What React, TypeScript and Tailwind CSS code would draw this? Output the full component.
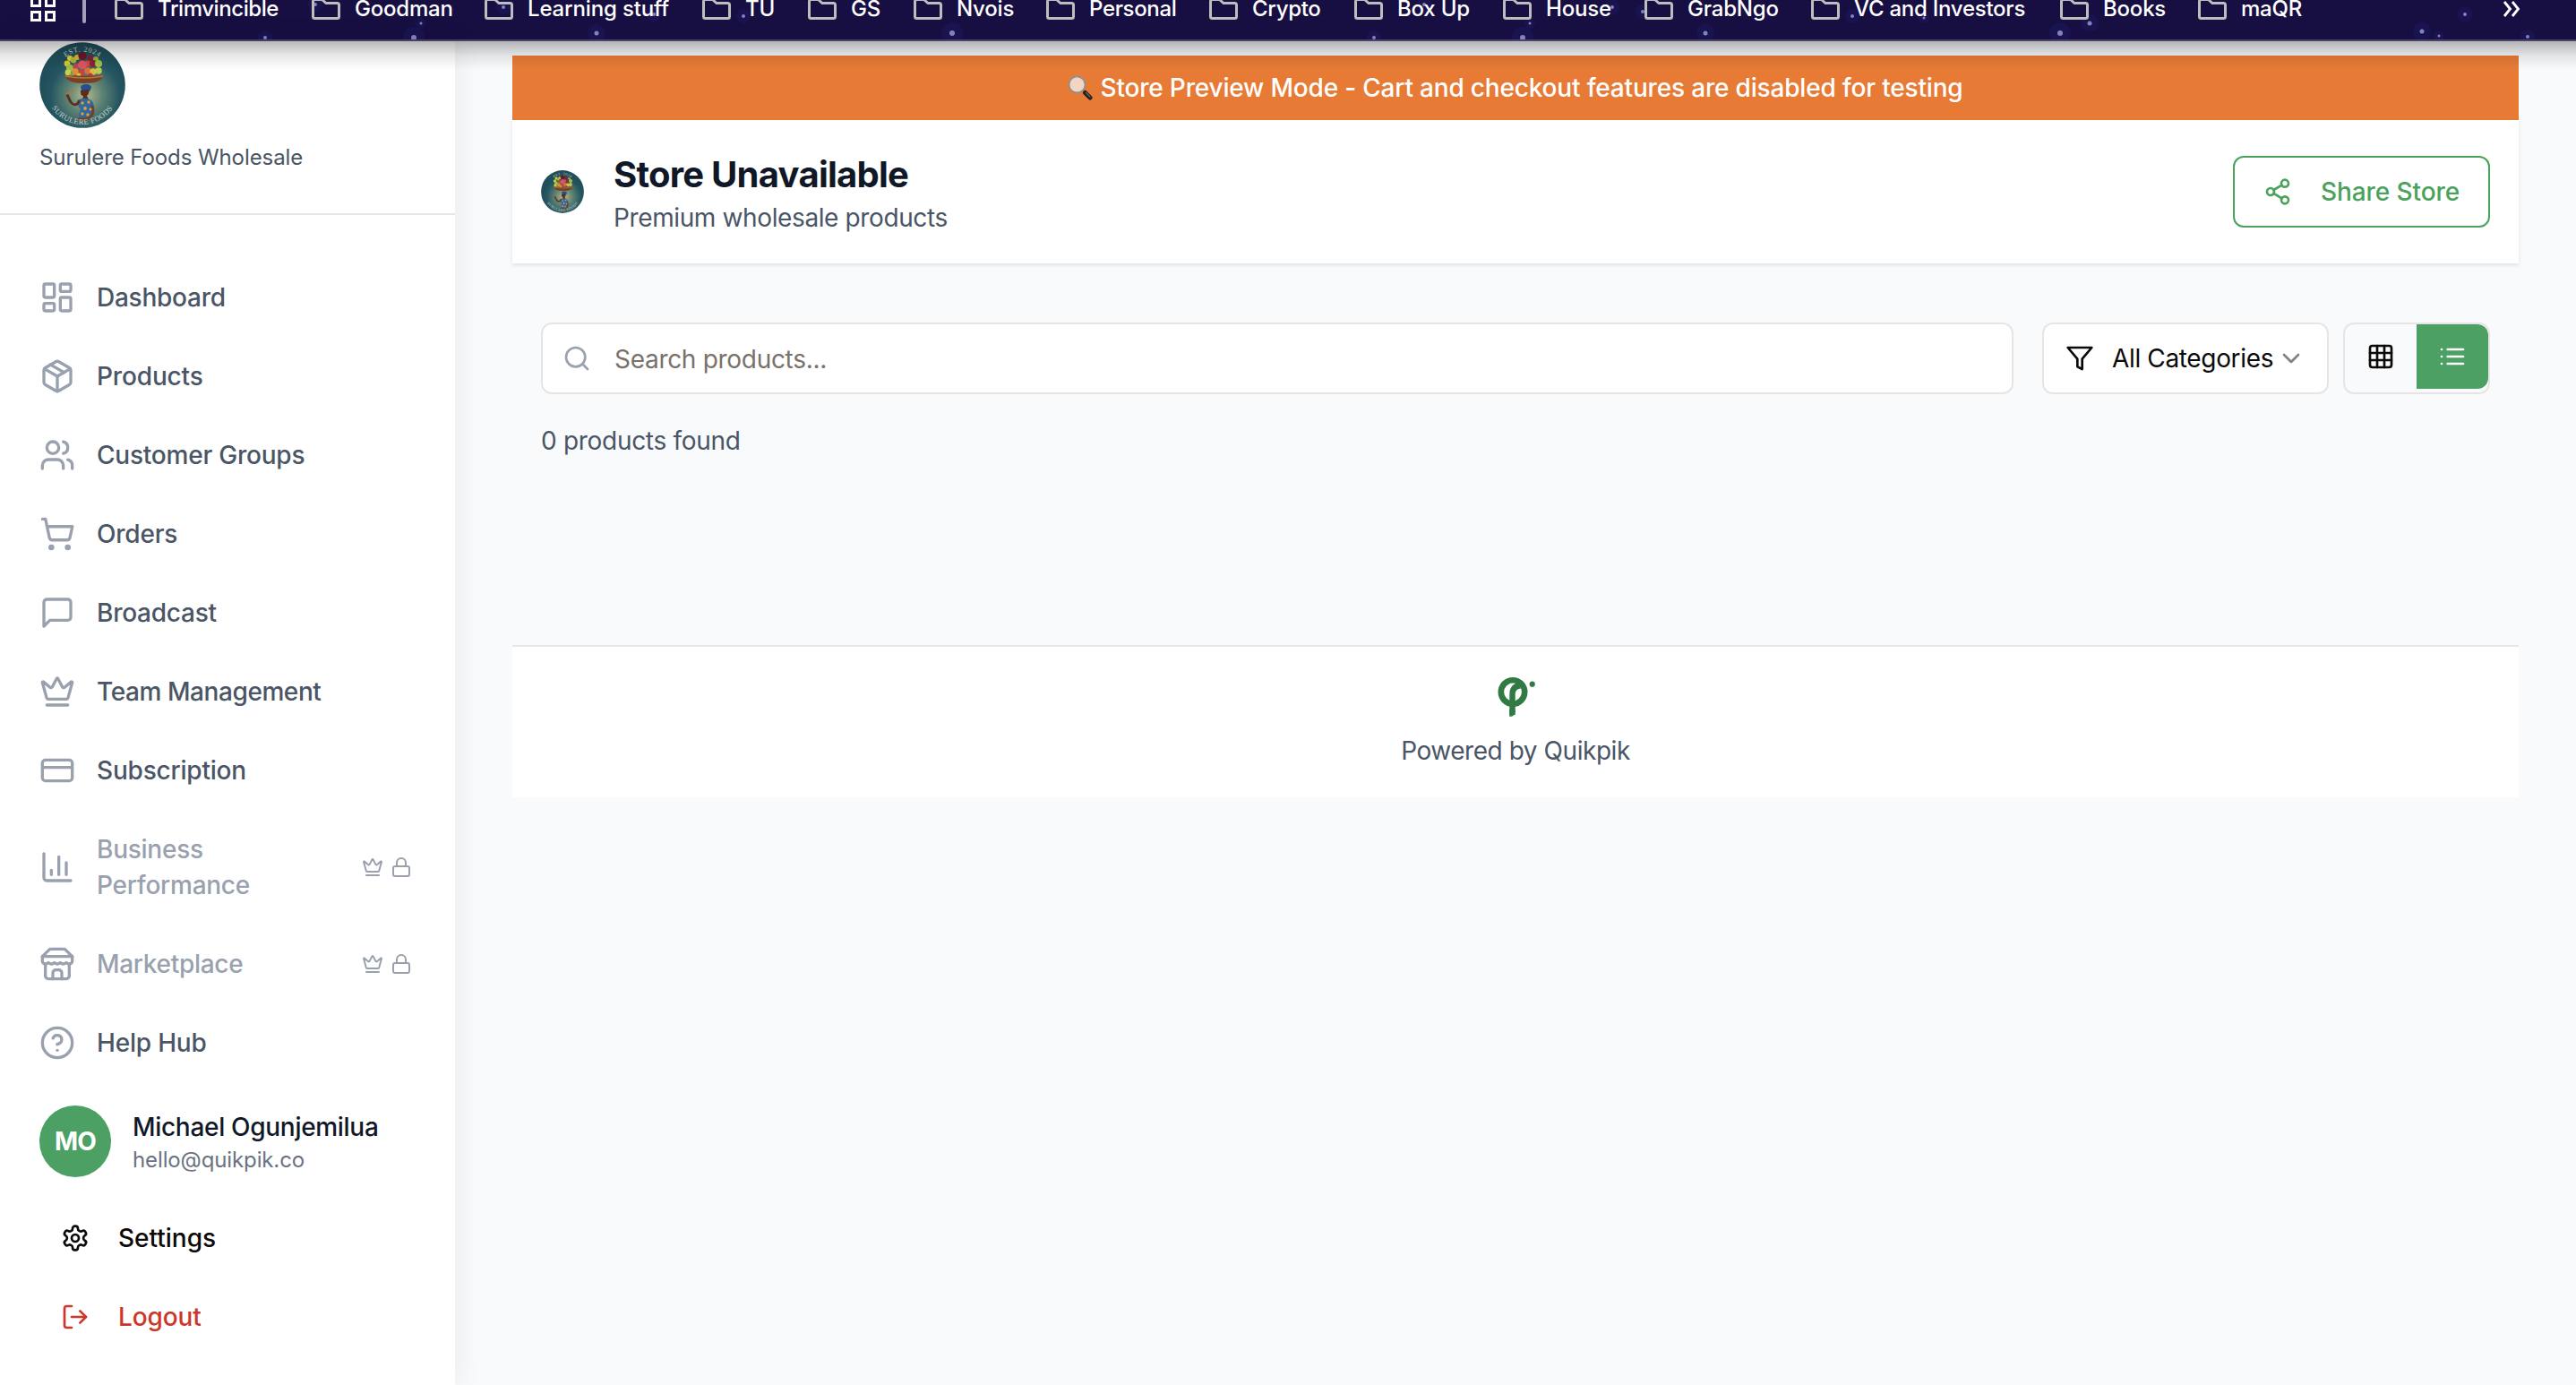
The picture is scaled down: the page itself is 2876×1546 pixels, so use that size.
import React from "react";
import type { ReactNode } from "react";

type IconProps = { className?: string; children?: ReactNode };

function Icon({ className = "size-10", children }: IconProps) {
  return (
    <svg
      viewBox="0 0 24 24"
      fill="none"
      stroke="currentColor"
      strokeWidth={2}
      strokeLinecap="round"
      strokeLinejoin="round"
      className={`shrink-0 ${className}`}
    >
      {children}
    </svg>
  );
}

const crown = (
  <>
    <path d="M11.562 3.266a.5.5 0 0 1 .876 0L15.39 8.87a1 1 0 0 0 1.516.294L21.183 5.5a.5.5 0 0 1 .798.519l-2.834 10.246a1 1 0 0 1-.956.734H5.81a1 1 0 0 1-.957-.734L2.02 6.02a.5.5 0 0 1 .798-.519l4.276 3.664a1 1 0 0 0 1.516-.294z" />
    <path d="M5 21h14" />
  </>
);

const glyphs = {
  dashboard: (
    <>
      <rect width="7" height="9" x="3" y="3" rx="1" />
      <rect width="7" height="5" x="14" y="3" rx="1" />
      <rect width="7" height="9" x="14" y="12" rx="1" />
      <rect width="7" height="5" x="3" y="16" rx="1" />
    </>
  ),
  box: (
    <>
      <path d="m7.5 4.27 9 5.15" />
      <path d="M21 8a2 2 0 0 0-1-1.73l-7-4a2 2 0 0 0-2 0l-7 4A2 2 0 0 0 3 8v8a2 2 0 0 0 1 1.73l7 4a2 2 0 0 0 2 0l7-4A2 2 0 0 0 21 16Z" />
      <path d="m3.3 7 8.7 5 8.7-5" />
      <path d="M12 22V12" />
    </>
  ),
  users: (
    <>
      <path d="M16 21v-2a4 4 0 0 0-4-4H6a4 4 0 0 0-4 4v2" />
      <circle cx="9" cy="7" r="4" />
      <path d="M22 21v-2a4 4 0 0 0-3-3.87" />
      <path d="M16 3.13a4 4 0 0 1 0 7.75" />
    </>
  ),
  cart: (
    <>
      <circle cx="8" cy="21" r="1" />
      <circle cx="19" cy="21" r="1" />
      <path d="M2.05 2.05h2l2.66 12.42a2 2 0 0 0 2 1.58h9.78a2 2 0 0 0 1.95-1.57l1.65-7.43H5.12" />
    </>
  ),
  message: <path d="M21 15a2 2 0 0 1-2 2H7l-4 4V5a2 2 0 0 1 2-2h14a2 2 0 0 1 2 2z" />,
  crown,
  card: (
    <>
      <rect width="20" height="14" x="2" y="5" rx="2" />
      <path d="M2 10h20" />
    </>
  ),
  chart: (
    <>
      <path d="M3 3v16a2 2 0 0 0 2 2h16" />
      <path d="M18 17V9" />
      <path d="M13 17V5" />
      <path d="M8 17v-3" />
    </>
  ),
  store: (
    <>
      <path d="m2 7 4.41-4.41A2 2 0 0 1 7.83 2h8.34a2 2 0 0 1 1.42.59L22 7" />
      <path d="M4 12v8a2 2 0 0 0 2 2h12a2 2 0 0 0 2-2v-8" />
      <path d="M15 22v-4a2 2 0 0 0-2-2h-2a2 2 0 0 0-2 2v4" />
      <path d="M2 7h20" />
      <path d="M22 7v3a2 2 0 0 1-2 2a2.7 2.7 0 0 1-1.59-.63.7.7 0 0 0-.82 0A2.7 2.7 0 0 1 16 12a2.7 2.7 0 0 1-1.59-.63.7.7 0 0 0-.82 0A2.7 2.7 0 0 1 12 12a2.7 2.7 0 0 1-1.59-.63.7.7 0 0 0-.82 0A2.7 2.7 0 0 1 8 12a2.7 2.7 0 0 1-1.59-.63.7.7 0 0 0-.82 0A2.7 2.7 0 0 1 4 12a2 2 0 0 1-2-2V7" />
    </>
  ),
  help: (
    <>
      <circle cx="12" cy="12" r="10" />
      <path d="M9.09 9a3 3 0 0 1 5.83 1c0 2-3 3-3 3" />
      <path d="M12 17h.01" />
    </>
  ),
  lock: (
    <>
      <rect width="18" height="11" x="3" y="11" rx="2" />
      <path d="M7 11V7a5 5 0 0 1 10 0v4" />
    </>
  ),
  settings: (
    <>
      <path d="M12.22 2h-.44a2 2 0 0 0-2 2v.18a2 2 0 0 1-1 1.73l-.43.25a2 2 0 0 1-2 0l-.15-.08a2 2 0 0 0-2.73.73l-.22.38a2 2 0 0 0 .73 2.73l.15.1a2 2 0 0 1 1 1.72v.51a2 2 0 0 1-1 1.74l-.15.09a2 2 0 0 0-.73 2.73l.22.38a2 2 0 0 0 2.73.73l.15-.08a2 2 0 0 1 2 0l.43.25a2 2 0 0 1 1 1.73V20a2 2 0 0 0 2 2h.44a2 2 0 0 0 2-2v-.18a2 2 0 0 1 1-1.73l.43-.25a2 2 0 0 1 2 0l.15.08a2 2 0 0 0 2.73-.73l.22-.39a2 2 0 0 0-.73-2.73l-.15-.08a2 2 0 0 1-1-1.74v-.5a2 2 0 0 1 1-1.74l.15-.09a2 2 0 0 0 .73-2.73l-.22-.38a2 2 0 0 0-2.73-.73l-.15.08a2 2 0 0 1-2 0l-.43-.25a2 2 0 0 1-1-1.73V4a2 2 0 0 0-2-2z" />
      <circle cx="12" cy="12" r="3" />
    </>
  ),
  logout: (
    <>
      <path d="M9 21H5a2 2 0 0 1-2-2V5a2 2 0 0 1 2-2h4" />
      <path d="m16 17 5-5-5-5" />
      <path d="M21 12H9" />
    </>
  ),
  share: (
    <>
      <circle cx="18" cy="5" r="3" />
      <circle cx="6" cy="12" r="3" />
      <circle cx="18" cy="19" r="3" />
      <path d="m8.59 13.51 6.83 3.98" />
      <path d="m15.41 6.51-6.82 3.98" />
    </>
  ),
  search: (
    <>
      <circle cx="11" cy="11" r="8" />
      <path d="m21 21-4.3-4.3" />
    </>
  ),
  filter: <path d="M22 3H2l8 9.46V19l4 2v-8.54z" />,
  chevron: <path d="m6 9 6 6 6-6" />,
  grid: (
    <>
      <rect width="18" height="18" x="3" y="3" rx="2" />
      <path d="M3 9h18" />
      <path d="M3 15h18" />
      <path d="M9 3v18" />
      <path d="M15 3v18" />
    </>
  ),
  list: (
    <>
      <path d="M8 6h13M8 12h13M8 18h13" />
      <path d="M3 6h.01M3 12h.01M3 18h.01" />
    </>
  ),
};

const fruit: [number, number, number, string][] = [
  [31, 24, 3.4, "#d9c437"],
  [34, 18, 3, "#e3cf3c"],
  [38, 20, 3.4, "#a9b93a"],
  [42, 17, 3, "#d8b52f"],
  [48, 15.5, 4.6, "#6d1626"],
  [57, 18, 3.6, "#7d2338"],
  [63, 19, 3, "#99ad38"],
  [54, 24, 3.4, "#cf4a3c"],
  [60, 24, 4, "#8a2436"],
  [66, 24, 4, "#a3bf4b"],
  [34, 29, 4, "#9cc04a"],
  [41, 27, 3.6, "#b8474c"],
  [48, 25.5, 5, "#dd5560"],
  [32, 34, 3.4, "#c9cf4a"],
  [40, 33, 3.8, "#e08a3a"],
  [47, 34, 3.4, "#c8433b"],
  [54, 32, 3.8, "#d9723a"],
  [60, 33, 3.8, "#e0b644"],
  [66, 32, 3.8, "#bccb4c"],
  [36, 37, 2.6, "#7fa640"],
  [57, 37, 2.6, "#b53f3d"],
  [44, 37, 2.4, "#d9c437"],
];

function BrandLogo({ id, className }: { id: string; className: string }) {
  return (
    <svg viewBox="0 0 96 96" className={`shrink-0 ${className}`}>
      <defs>
        <radialGradient id={`${id}-glow`} cx="0.53" cy="0.62" r="0.5">
          <stop offset="0" stopColor="#b5b98c" />
          <stop offset="0.4" stopColor="#5f8474" />
          <stop offset="0.8" stopColor="#265661" />
          <stop offset="1" stopColor="#204f5a" />
        </radialGradient>
        <path id={`${id}-top`} d="M14 48a34 37.5 0 0 1 68 0" />
        <path id={`${id}-bottom`} d="M6 48a42 44 0 0 0 84 0" />
      </defs>
      <circle cx="48" cy="48" r="47.8" fill={`url(#${id}-glow)`} />
      {fruit.map(([x, y, r, c], i) => (
        <circle key={i} cx={x} cy={y} r={r} fill={c} />
      ))}
      <path d="M29 37.5h42c-1 5-7 8.500-21 8.500s-20-3.500-21-8.500z" fill="#7b3f22" />
      <path d="M29 38q21 4 42 0" fill="none" stroke="#b8733f" strokeWidth="1.400" />
      <path d="M46 50c1-4 12-4 12 1l-2 4-9-1z" fill="#24508f" />
      <path d="M46 54l9-1c1 4-1 6-2 7l2 4h-7l1-4c-3 0-3-3-3-6z" fill="#5c2c1c" />
      <path d="M43 65c6-4 15-2 17 3 2 6 2 12-1 17l-14 1c-2-4 0-8 1-11-3-3-4-6-3-10z" fill="#2f699e" />
      <path d="M44 66c-2 5-6 5-9 1l-4-8" fill="none" stroke="#5c2c1c" strokeWidth="2.800" strokeLinecap="round" />
      <path d="M30 58l8-4" stroke="#b8733f" strokeWidth="1.500" strokeLinecap="round" />
      <path d="M59 72c2 7 1 10-6 14h-9" fill="none" stroke="#7a3c24" strokeWidth="2.800" strokeLinecap="round" />
      <g fill="#e0a033">
        <circle cx="48" cy="68" r="1.700" />
        <circle cx="55" cy="67" r="1.700" />
        <circle cx="51" cy="74" r="1.900" />
        <circle cx="57" cy="75" r="1.500" />
        <circle cx="48" cy="80" r="1.700" />
        <circle cx="54" cy="81" r="1.700" />
      </g>
      <g fill="#c3d2cf" className="font-['Liberation_Serif']">
        <text fontSize="8" letterSpacing="0.800" textAnchor="middle">
          <textPath href={`#${id}-top`} startOffset="50%">
            EST. 2024
          </textPath>
        </text>
        <text fontSize="8.500" letterSpacing="0.500" textAnchor="middle">
          <textPath href={`#${id}-bottom`} startOffset="50%">
            SURULERE FOODS
          </textPath>
        </text>
      </g>
    </svg>
  );
}

const bookmarks: [string, string, string][] = [
  ["Trimvincible", "w-[220px]", "tracking-[-0.42px]"],
  ["Goodman", "w-[193px]", "tracking-[-0.2px]"],
  ["Learning stuff", "w-[243px]", "tracking-[-0.15px]"],
  ["TU", "w-[118px]", "tracking-[-0.2px]"],
  ["GS", "w-[118px]", "tracking-[-0.2px]"],
  ["Nvois", "w-[148px]", "tracking-[-0.2px]"],
  ["Personal", "w-[182px]", "tracking-[-0.35px]"],
  ["Crypto", "w-[162px]", "tracking-[-0.3px]"],
  ["Box Up", "w-[166px]", "tracking-[-0.2px]"],
  ["House", "w-[158px]", "tracking-[-0.2px]"],
  ["GrabNgo", "w-[186px]", "tracking-[-0.2px]"],
  ["VC and Investors", "w-[278px]", "tracking-[-0.25px]"],
  ["Books", "w-[154px]", "tracking-[-0.2px]"],
  ["maQR", "w-[154px]", "tracking-[-0.2px]"],
];

const stars: [number, number, number][] = [
  [296, 42, 2], [462, 42, 3], [470, 26, 1.5], [666, 37, 2.5], [562, 8, 2], [730, 16, 2], [830, 18, 2],
  [1063, 37, 3], [1534, 42, 2], [1700, 42, 3], [1708, 26, 1.5], [1800, 8, 2], [1834, 13, 2], [1904, 37, 2.5],
  [2068, 18, 2], [2300, 37, 3], [2333, 26, 2.5], [2704, 35, 2.5], [2723, 40, 1.5], [2752, 16, 2], [2822, 41, 2],
  [352, 5, 2], [1590, 5, 2], [2148, 20, 1.5],
];

function BookmarksBar() {
  return (
    <header className="relative h-[46px] w-full shrink-0 overflow-hidden border-b-2 border-[#4b4169] bg-[#170e42]">
      <svg viewBox="0 0 2876 44" className="absolute inset-0 h-11 w-[2876px]">
        {stars.map(([x, y, r]) => (
          <g key={x}>
            <circle cx={x} cy={y} r={r * 4} fill="#2b3f9a" opacity="0.15" />
            <circle cx={x} cy={y} r={r} fill="#a9a6e0" opacity="0.750" />
          </g>
        ))}
      </svg>
      <div className="relative -mt-3.5 flex h-12 items-center pl-[34px] text-2xl font-medium text-white">
        <div className="grid size-7 grid-cols-2 gap-1">
          <span className="border-[3px] border-white" />
          <span className="border-[3px] border-white" />
          <span className="border-[3px] border-white" />
          <span className="border-[3px] border-white" />
        </div>
        <span className="mr-8 ml-[30px] h-8 w-1 rounded-full bg-[#a3a0bd]" />
        {bookmarks.map(([label, width, tracking]) => (
          <div key={label} className={`flex shrink-0 items-center gap-4 ${width}`}>
            <svg viewBox="0 0 32 26" fill="none" stroke="#bdbdbd" strokeWidth="3" className="h-[26px] w-8 shrink-0">
              <path d="M1.500 4.500a2 2 0 0 1 2-2h8l4.500 4H28.500a2 2 0 0 1 2 2V21.500a2 2 0 0 1-2 2H3.500a2 2 0 0 1-2-2z" />
            </svg>
            <span className={`whitespace-nowrap ${tracking}`}>{label}</span>
          </div>
        ))}
        <svg viewBox="0 0 20 18" fill="none" stroke="white" strokeWidth="2.800" className="ml-[186px] h-[18px] w-5 shrink-0">
          <path d="M2 1l6.500 8L2 17M11 1l6.500 8L11 17" />
        </svg>
      </div>
    </header>
  );
}

const nav: { label: string; icon: ReactNode; tracking: string; locked?: boolean }[] = [
  { label: "Dashboard", icon: glyphs.dashboard, tracking: "tracking-[-0.25px]" },
  { label: "Products", icon: glyphs.box, tracking: "tracking-[-0.15px]" },
  { label: "Customer Groups", icon: glyphs.users, tracking: "tracking-[-0.22px]" },
  { label: "Orders", icon: glyphs.cart, tracking: "tracking-[-0.2px]" },
  { label: "Broadcast", icon: glyphs.message, tracking: "tracking-[-0.25px]" },
  { label: "Team Management", icon: glyphs.crown, tracking: "tracking-[-0.42px]" },
  { label: "Subscription", icon: glyphs.card, tracking: "tracking-[-0.2px]" },
  { label: "Business Performance", icon: glyphs.chart, tracking: "tracking-[-0.25px]", locked: true },
  { label: "Marketplace", icon: glyphs.store, tracking: "tracking-[-0.3px]", locked: true },
  { label: "Help Hub", icon: glyphs.help, tracking: "tracking-[-0.2px]" },
];

function Sidebar() {
  return (
    <aside className="z-10 flex w-[508px] shrink-0 flex-col bg-white shadow-[0_0_30px_rgba(0,0,0,0.08)]">
      <div className="border-b-2 border-gray-200 pt-px pb-[46px] pl-11">
        <BrandLogo id="side" className="size-24" />
        <p className="mt-[17px] text-2xl leading-8 tracking-[-0.08px] text-gray-600">Surulere Foods Wholesale</p>
      </div>
      <nav className="mt-12 flex flex-col pr-12 pl-11 text-[28px] leading-10 font-medium">
        {nav.map((item) => (
          <a
            key={item.label}
            className={
              item.locked
                ? "flex items-center py-6 text-gray-400"
                : "flex items-center py-6 text-gray-600"
            }
          >
            <Icon className="size-10 text-gray-400">{item.icon}</Icon>
            <span className={`ml-6 flex-1 ${item.tracking}`}>{item.label}</span>
            {item.locked && (
              <span className="ml-20 flex gap-2">
                <Icon className="size-6">{glyphs.crown}</Icon>
                <Icon className="size-6">{glyphs.lock}</Icon>
              </span>
            )}
          </a>
        ))}
      </nav>
      <div className="mt-[26px] flex items-center gap-6 pl-11">
        <div className="flex size-20 items-center justify-center rounded-full bg-[#4ca064] text-[28px] font-bold tracking-[-0.8px] text-white">
          MO
        </div>
        <div>
          <p className="text-[28px] leading-10 font-medium tracking-[-0.3px] text-gray-900">Michael Ogunjemilua</p>
          <p className="text-2xl leading-[33px] tracking-[-0.12px] text-gray-500">hello@quikpik.co</p>
        </div>
      </div>
      <div className="mt-6 flex flex-col pl-[68px] text-[28px] leading-10 font-medium">
        <button className="flex items-center gap-8 py-6 text-stone-950">
          <Icon className="size-8">{glyphs.settings}</Icon>
          Settings
        </button>
        <button className="flex items-center gap-8 py-6 tracking-[-0.1px] text-[#cd372b]">
          <Icon className="size-8">{glyphs.logout}</Icon>
          Logout
        </button>
      </div>
    </aside>
  );
}

function Magnifier() {
  return (
    <svg viewBox="0 0 28 28" className="size-7 shrink-0">
      <path d="M17.500 17.500l2.500 2.500" stroke="#8b8b8b" strokeWidth="2.500" />
      <path d="M19.500 19.500l5.500 5.500" stroke="#222" strokeWidth="5" strokeLinecap="round" />
      <path d="M20.500 19.500l4.500 4.500" stroke="#666" strokeWidth="1.200" strokeLinecap="round" />
      <circle cx="10.500" cy="10.500" r="9" fill="#f3d5c3" stroke="#8f8f8f" strokeWidth="1.800" />
      <path d="M3.500 7.500a8 8 0 0 1 8-4.500" fill="none" stroke="#d5d5d5" strokeWidth="1" />
    </svg>
  );
}

function QuikpikMark() {
  return (
    <svg viewBox="0 0 48 48" className="size-12">
      <circle cx="21" cy="20.500" r="13.200" fill="none" stroke="#327a44" strokeWidth="6.600" />
      <path d="M20.500 46V23.500c0-6.500 3-10 9-10" fill="none" stroke="#327a44" strokeWidth="6.400" />
      <path d="M17.300 40h6.400c0 5-1.500 8-6.400 8z" fill="#327a44" />
      <circle cx="42.700" cy="11.700" r="3.100" fill="#327a44" />
    </svg>
  );
}

function Store() {
  return (
    <main className="flex flex-1 flex-col bg-[#f9fafc] pt-4 pr-16 pl-16">
      <div className="flex h-[72px] shrink-0 items-center justify-center gap-2 bg-[#e77b36] text-[28px] font-medium tracking-[-0.18px] text-white">
        <Magnifier />
        <span>Store Preview Mode - Cart and checkout features are disabled for testing</span>
      </div>

      <div className="flex h-40 shrink-0 items-center bg-white px-8 shadow-[0_2px_4px_rgba(0,0,0,0.1)]">
        <BrandLogo id="head" className="size-12" />
        <div className="ml-[33px] flex-1 pt-px">
          <h1 className="text-[40px] leading-[56px] font-bold tracking-[-0.75px] text-gray-900">Store Unavailable</h1>
          <p className="text-[28px] leading-10 tracking-[-0.38px] text-gray-600">Premium wholesale products</p>
        </div>
        <button className="flex h-20 w-[287px] items-center justify-between rounded-xl border-2 border-[#4aa25c] px-8 text-[28px] font-medium tracking-[-0.1px] text-[#4aa25c]">
          <Icon className="size-8">{glyphs.share}</Icon>
          Share Store
        </button>
      </div>

      <div className="flex gap-8 px-8 pt-[66px] text-[28px]">
        <div className="flex h-20 flex-1 items-center gap-[26px] rounded-xl border-2 border-stone-200 bg-white px-[22px] tracking-[-0.3px] text-stone-500">
          <Icon className="size-8 text-gray-400">{glyphs.search}</Icon>
          <span className="pt-0.5">Search products...</span>
        </div>
        <div className="flex gap-4">
          <div className="flex h-20 w-80 items-center rounded-xl border-2 border-stone-200 bg-white px-6 tracking-[-0.35px] text-stone-950">
            <Icon className="mr-5 size-8">{glyphs.filter}</Icon>
            <span className="flex-1 whitespace-nowrap">All Categories</span>
            <Icon className="size-8 opacity-50">{glyphs.chevron}</Icon>
          </div>
          <div className="flex h-20 items-start overflow-hidden rounded-xl border-2 border-stone-200">
            <button className="flex h-[72px] w-20 items-center justify-center text-stone-950">
              <Icon className="size-8">{glyphs.grid}</Icon>
            </button>
            <button className="flex h-[72px] w-20 items-center justify-center rounded-r-xl bg-[#4ca064] text-white">
              <Icon className="size-8">{glyphs.list}</Icon>
            </button>
          </div>
        </div>
      </div>

      <p className="mt-8 px-8 text-[28px] leading-10 tracking-[-0.3px] text-gray-600">0 products found</p>

      <footer className="mt-52 flex h-[170px] flex-col items-center border-t-2 border-gray-200 bg-white pt-[30px]">
        <QuikpikMark />
        <p className="mt-[18px] text-[28px] leading-10 tracking-[-0.45px] text-gray-600">Powered by Quikpik</p>
      </footer>
    </main>
  );
}

export default function App() {
  return (
    <div className="flex h-[1546px] w-full flex-col overflow-hidden bg-[#f9fafc] font-[Inter,'Liberation_Sans',sans-serif]">
      <BookmarksBar />
      <div className="relative flex flex-1">
        <Sidebar />
        <Store />
        <div className="pointer-events-none absolute inset-x-0 top-0 z-20 h-8 bg-gradient-to-b from-black/28 via-black/9 to-transparent" />
      </div>
    </div>
  );
}
